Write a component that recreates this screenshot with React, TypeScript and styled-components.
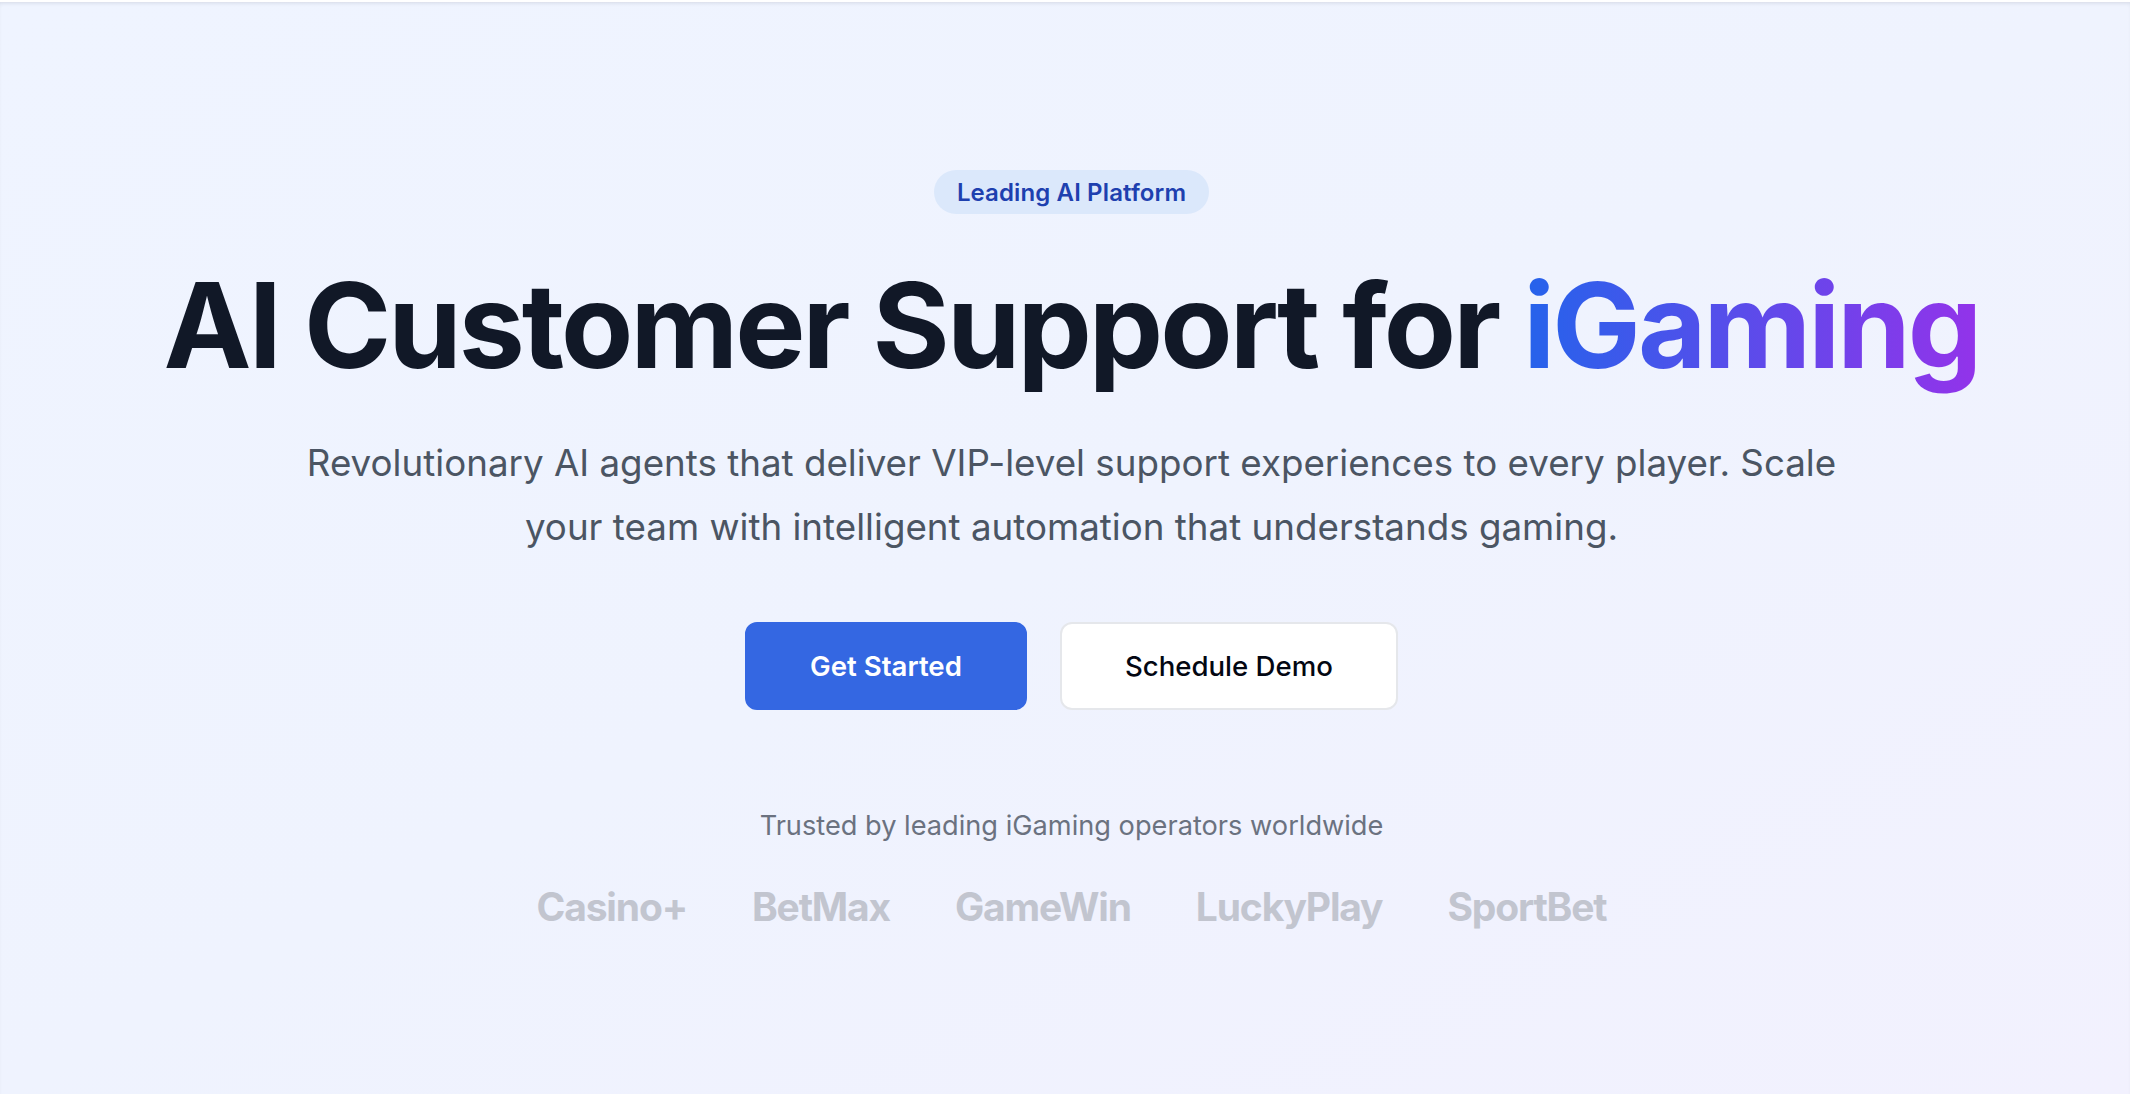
import React from "react";
import styled, { createGlobalStyle } from "styled-components";

const GlobalStyle = createGlobalStyle`
  html, body {
    margin: 0;
    padding: 0;
    background: #ffffff;
    font-family: Inter, "Noto Sans", "Liberation Sans", sans-serif;
    -webkit-font-smoothing: antialiased;
  }
  * { box-sizing: border-box; }
`;

const Hero = styled.section`
  position: relative;
  height: 1094px;
  padding: 168px 0 0 13px;
  display: flex;
  flex-direction: column;
  align-items: center;
  background: linear-gradient(to bottom right, #eff4ff 0%, #eff3fe 50%, #f2f1fe 100%);
  box-shadow: inset 0 3px 4px -2px rgba(15, 23, 42, 0.12);
  border-top: 2px solid #ffffff;
`;

const Badge = styled.span`
  display: inline-flex;
  align-items: center;
  height: 44px;
  padding: 0 23px;
  border-radius: 9999px;
  background: #dbe8fb;
  color: #1e40af;
  font-size: 24px;
  font-weight: 600;
  letter-spacing: 0.005em;
`;

const Title = styled.h1`
  margin: 46px 0 0;
  font-size: 118px;
  line-height: 130px;
  font-weight: 700;
  letter-spacing: -0.025em;
  color: #111827;
  text-align: center;
  white-space: nowrap;
`;

const Gradient = styled.span`
  background: linear-gradient(to right, #2563eb, #9333ea);
  -webkit-background-clip: text;
  background-clip: text;
  color: transparent;
  padding-bottom: 0.12em;
`;

const Lead = styled.p`
  margin: 41px 0 0;
  max-width: 1600px;
  font-size: 36.75px;
  line-height: 64px;
  font-weight: 400;
  color: #4b5563;
  text-align: center;
`;

const Line = styled.span`
  display: block;
`;

const Actions = styled.div`
  display: flex;
  gap: 33px;
  margin-top: 63px;
`;

const Button = styled.button<{ $primary?: boolean }>`
  height: 88px;
  padding: 0 63px;
  border-radius: 12px;
  font-family: inherit;
  font-size: 27.6px;
  font-weight: ${(p) => (p.$primary ? 600 : 500)};
  cursor: pointer;
  border: 2px solid ${(p) => (p.$primary ? "#3467e2" : "#e5e7eb")};
  background: ${(p) => (p.$primary ? "#3467e2" : "#ffffff")};
  color: ${(p) => (p.$primary ? "#ffffff" : "#030712")};
`;

const Trusted = styled.p`
  margin: 96px 0 0;
  font-size: 27.2px;
  line-height: 40px;
  color: #6b7280;
`;

const Logos = styled.div`
  display: flex;
  gap: 65px;
  margin-top: 31px;
`;

const Logo = styled.span`
  font-size: 39px;
  line-height: 60px;
  font-weight: 700;
  color: #c2c5cf;
  letter-spacing: -0.03em;
`;

const logos = ["Casino+", "BetMax", "GameWin", "LuckyPlay", "SportBet"];

export default function App() {
  return (
    <>
      <GlobalStyle />
      <Hero>
        <Badge>Leading AI Platform</Badge>
        <Title>
          AI Customer Support for <Gradient>iGaming</Gradient>
        </Title>
        <Lead>
          <Line>Revolutionary AI agents that deliver VIP-level support experiences to every player. Scale</Line>
          <Line>your team with intelligent automation that understands gaming.</Line>
        </Lead>
        <Actions>
          <Button $primary>Get Started</Button>
          <Button>Schedule Demo</Button>
        </Actions>
        <Trusted>Trusted by leading iGaming operators worldwide</Trusted>
        <Logos>
          {logos.map((l) => (
            <Logo key={l}>{l}</Logo>
          ))}
        </Logos>
      </Hero>
    </>
  );
}
